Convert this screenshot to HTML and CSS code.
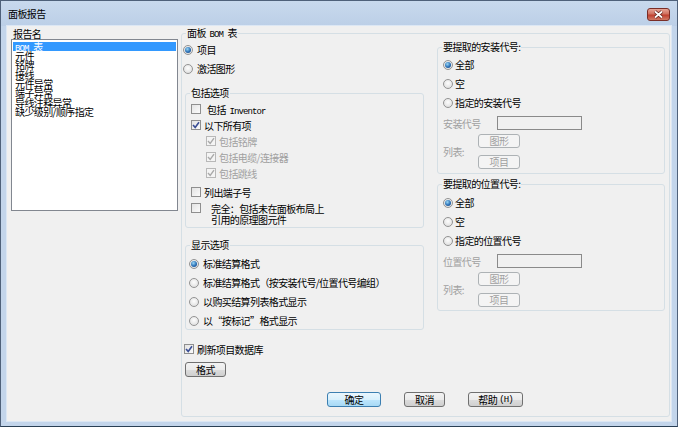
FILE: index.html
```html
<!DOCTYPE html>
<html>
<head>
<meta charset="utf-8">
<link rel="stylesheet" href="styles.css">
</head>
<body>
<div class="window">
  <div class="titlebar">
    <span class="title">面板报告</span>
    <span class="close"><svg width="13" height="9" viewBox="0 0 13 9"><path d="M3 1.5 L10 7.5 M10 1.5 L3 7.5" stroke="#5c1b14" stroke-width="3.2" fill="none"/><path d="M3 1.5 L10 7.5 M10 1.5 L3 7.5" stroke="#fff" stroke-width="1.7" fill="none"/></svg></span>
  </div>
  <div class="client">
    <div class="left">
      <div class="lbl">报告名</div>
      <div class="listbox">
        <div class="item sel"><span class="lat sp">BOM</span> 表</div>
        <div class="item">元件</div>
        <div class="item">铭牌</div>
        <div class="item">接线</div>
        <div class="item">元件异常</div>
        <div class="item">端子异常</div>
        <div class="item">导线注释异常</div>
        <div class="item">缺少级别/顺序指定</div>
      </div>
    </div>
    <div class="group main">
      <span class="gtitle">面板 <span class="lat sp sl">BOM</span> 表</span>
      <div class="col-l">
        <div class="row r19 ml1"><span class="radio on"></span><span class="t4">项目</span></div>
        <div class="row r19 ml1"><span class="radio"></span><span class="t4">激活图形</span></div>
        <div class="group incl">
          <span class="gtitle">包括选项</span>
          <div class="row r16"><span class="check"></span><span class="t6">包括 <span class="lat sl">Inventor</span></span></div>
          <div class="row r16"><span class="check"><svg width="8" height="8" viewBox="0 0 8 8"><path d="M1 4 L3.2 6.4 L7 1.2" fill="none" stroke="#3b4f95" stroke-width="1.6"/></svg></span><span class="t3">以下所有项</span></div>
          <div class="row r16 sub"><span class="check dis"><svg width="8" height="8" viewBox="0 0 8 8"><path d="M1 4 L3.2 6.4 L7 1.2" fill="none" stroke="#a9a9a9" stroke-width="1.4"/></svg></span><span class="t3 gray">包括铭牌</span></div>
          <div class="row r16 sub"><span class="check dis"><svg width="8" height="8" viewBox="0 0 8 8"><path d="M1 4 L3.2 6.4 L7 1.2" fill="none" stroke="#a9a9a9" stroke-width="1.4"/></svg></span><span class="t3 gray">包括电缆/连接器</span></div>
          <div class="row r16 sub"><span class="check dis"><svg width="8" height="8" viewBox="0 0 8 8"><path d="M1 4 L3.2 6.4 L7 1.2" fill="none" stroke="#a9a9a9" stroke-width="1.4"/></svg></span><span class="t3 gray">包括跳线</span></div>
          <div class="row r16 mt3"><span class="check"></span><span class="t3">列出端子号</span></div>
          <div class="row2"><span class="check ct3"></span><span class="multi">完全：包括未在面板布局上<br>引用的原理图元件</span></div>
        </div>
        <div class="group disp">
          <span class="gtitle">显示选项</span>
          <div class="row r19"><span class="radio on"></span><span class="t4">标准结算格式</span></div>
          <div class="row r19"><span class="radio"></span><span class="t4">标准结算格式（按安装代号/位置代号编组）</span></div>
          <div class="row r19"><span class="radio"></span><span class="t4">以购买结算列表格式显示</span></div>
          <div class="row r19"><span class="radio"></span><span class="t4">以“按标记”格式显示</span></div>
        </div>
        <div class="row r16 refresh"><span class="check"><svg width="8" height="8" viewBox="0 0 8 8"><path d="M1 4 L3.2 6.4 L7 1.2" fill="none" stroke="#3b4f95" stroke-width="1.6"/></svg></span><span class="t3">刷新项目数据库</span></div>
        <div class="btn fmt">格式</div>
      </div>
      <div class="col-r">
        <div class="group rg g1">
          <span class="gtitle">要提取的安装代号:</span>
          <div class="row r19"><span class="radio on"></span><span class="t2">全部</span></div>
          <div class="row r19"><span class="radio"></span><span class="t2">空</span></div>
          <div class="row r19"><span class="radio"></span><span class="t2">指定的安装代号</span></div>
          <div class="field"><span class="flabel gray">安装代号</span><span class="input"></span></div>
          <div class="listrow"><span class="llabel gray">列表:</span><div class="btncol"><div class="btn dis sm">图形</div><div class="btn dis sm">项目</div></div></div>
        </div>
        <div class="group rg g2">
          <span class="gtitle">要提取的位置代号:</span>
          <div class="row r19 first"><span class="radio on"></span><span class="t2">全部</span></div>
          <div class="row r19"><span class="radio"></span><span class="t2">空</span></div>
          <div class="row r19"><span class="radio"></span><span class="t2">指定的位置代号</span></div>
          <div class="field"><span class="flabel gray">位置代号</span><span class="input"></span></div>
          <div class="listrow"><span class="llabel gray">列表:</span><div class="btncol"><div class="btn dis sm">图形</div><div class="btn dis sm">项目</div></div></div>
        </div>
      </div>
      <div class="actions">
        <div class="btn def ok">确定</div>
        <div class="btn cancel">取消</div>
        <div class="btn help">帮助 <span class="lat sl">(H)</span></div>
      </div>
    </div>
  </div>
</div>
</body>
</html>
```
FILE: styles.css
```css
* { box-sizing: border-box; }
html, body { margin: 0; padding: 0; }
body {
  font-family: "Noto Sans CJK SC", "Noto Sans", sans-serif;
  font-size: 10px;
  letter-spacing: -0.6px;
  color: #000;
  background: #f0f0f0;
}
.lat { font-family: "Liberation Mono", monospace; font-size: 9px; letter-spacing: -0.9px; }
.lat.sp { margin-right: 3px; }
.lat.sl { margin-left: 2px; }

.window {
  width: 678px;
  height: 427px;
  border: 1px solid #4f617a;
  border-bottom-color: #2a3f55;
  background: #c3d5eb;
  padding: 0 6px 5px;
  display: flex;
  flex-direction: column;
}
.titlebar {
  height: 25px;
  margin: 0 -6px;
  padding: 0 7px 0 7px;
  display: flex;
  align-items: center;
  justify-content: space-between;
  background: linear-gradient(#c8d9ed, #bccfe7);
}
.title { line-height: 12px; }
.close {
  width: 23px;
  height: 13px;
  margin-top: 1px;
  border: 1px solid #7a2d26;
  border-radius: 3px;
  background: linear-gradient(#e7a597, #d0705f 45%, #c0402f 55%, #d07a66);
  display: flex;
  align-items: center;
  justify-content: center;
}
.close svg { display: block; }

.client {
  flex: 1;
  background: #f0f0f0;
  outline: 1px solid #dce7f4;
  display: flex;
  align-items: flex-start;
}
.left { padding: 2px 0 0 4px; }
.lbl { height: 11px; line-height: 11px; padding-left: 2px; }
.listbox {
  width: 167px;
  height: 172px;
  border: 1px solid #828790;
  background: #fff;
  padding: 1.5px 1px;
}
.item { height: 9.4px; line-height: 9.4px; padding-left: 2px; white-space: nowrap; }
.item.sel { background: #3399ff; color: #fff; }

.group { position: relative; border: 1px solid #d5dfe5; border-radius: 3px; }
.gtitle {
  position: absolute;
  top: -7px;
  left: 4px;
  line-height: 12px;
  padding: 0 1px;
  background: #f0f0f0;
  white-space: nowrap;
}
.main {
  margin: 7px 0 0 3px;
  width: 489px;
  height: 384px;
  display: grid;
  grid-template-columns: 255px 228px;
  align-content: start;
  align-items: start;
}

.row { display: flex; align-items: center; white-space: nowrap; }
.r19 { height: 19px; }
.r16 { height: 16px; }
.ml1 { margin-left: 1px; }
.mt3 { margin-top: 3px; }
.t2 { margin-left: 2px; }
.t3 { margin-left: 3px; }
.t4 { margin-left: 4px; }
.t6 { margin-left: 6px; }
.gray { color: #a0a0a0; }

.radio {
  flex: none;
  position: relative;
  width: 10px;
  height: 10px;
  border-radius: 50%;
  border: 1px solid #939393;
  background: radial-gradient(circle at 50% 40%, #fdfdfd, #d9d9d9);
}
.radio.on::after {
  content: "";
  position: absolute;
  left: 1px;
  top: 1px;
  width: 6px;
  height: 6px;
  border-radius: 50%;
  background: radial-gradient(circle at 40% 35%, #9ad8f6, #2a6fb5 55%, #153f7a);
}
.check {
  flex: none;
  width: 10px;
  height: 10px;
  border: 1px solid #8f8f8f;
  background: linear-gradient(135deg, #e3e3e3, #fbfbfb);
  display: flex;
  align-items: center;
  justify-content: center;
}
.check svg { display: block; }
.check.dis { border-color: #b8b8b8; background: #f4f4f4; }

.col-l { padding-top: 6px; }
.incl {
  margin: 15px 0 0 3px;
  width: 239px;
  height: 135px;
  padding: 7px 0 0 5px;
}
.sub { margin-left: 15px; }
.row2 { display: flex; align-items: flex-start; white-space: nowrap; }
.ct3 { margin-top: 3px; }
.multi { margin-left: 10px; padding-top: 2.5px; line-height: 11px; }
.disp {
  margin: 17px 0 0 3px;
  width: 239px;
  height: 85px;
  padding: 8px 0 0 3px;
}
.refresh { margin: 11px 0 0 2px; }

.btn {
  height: 15px;
  border: 1px solid #707070;
  border-radius: 3px;
  background: linear-gradient(#f3f3f3, #ebebeb 50%, #dddddd 50%, #cfcfcf);
  display: flex;
  align-items: center;
  justify-content: center;
  line-height: 12px;
  white-space: nowrap;
}
.btn.def {
  border-color: #3c7fb1;
  background: linear-gradient(#eaf6fd, #d9f0fc 50%, #bee6fd 50%, #a7d9f5);
}
.btn.dis { border-color: #adb2b5; background: #f4f4f4; color: #a0a0a0; }
.fmt { margin: 5px 0 0 3px; width: 41px; }

.rg { width: 228px; height: 127px; padding: 7px 0 0 5px; }
.g1 { margin-top: 13px; }
.g2 { margin-top: 10px; }
.g2 .first { margin-top: 1px; }
.field { display: flex; align-items: center; height: 14px; margin-top: 4px; }
.flabel { width: 54px; }
.input { width: 85px; height: 14px; border: 1px solid #8a8a8a; background: #f0f0f0; }
.listrow { display: flex; align-items: center; margin-top: 4px; }
.llabel { width: 35px; }
.btncol { display: flex; flex-direction: column; gap: 7px; }
.btn.sm { width: 42px; height: 14px; }

.actions {
  grid-column: 1 / -1;
  display: flex;
  gap: 23px;
  padding-left: 145px;
  margin-top: 15px;
}
.ok { width: 54px; }
.cancel { width: 41px; }
.help { width: 55px; }
```
